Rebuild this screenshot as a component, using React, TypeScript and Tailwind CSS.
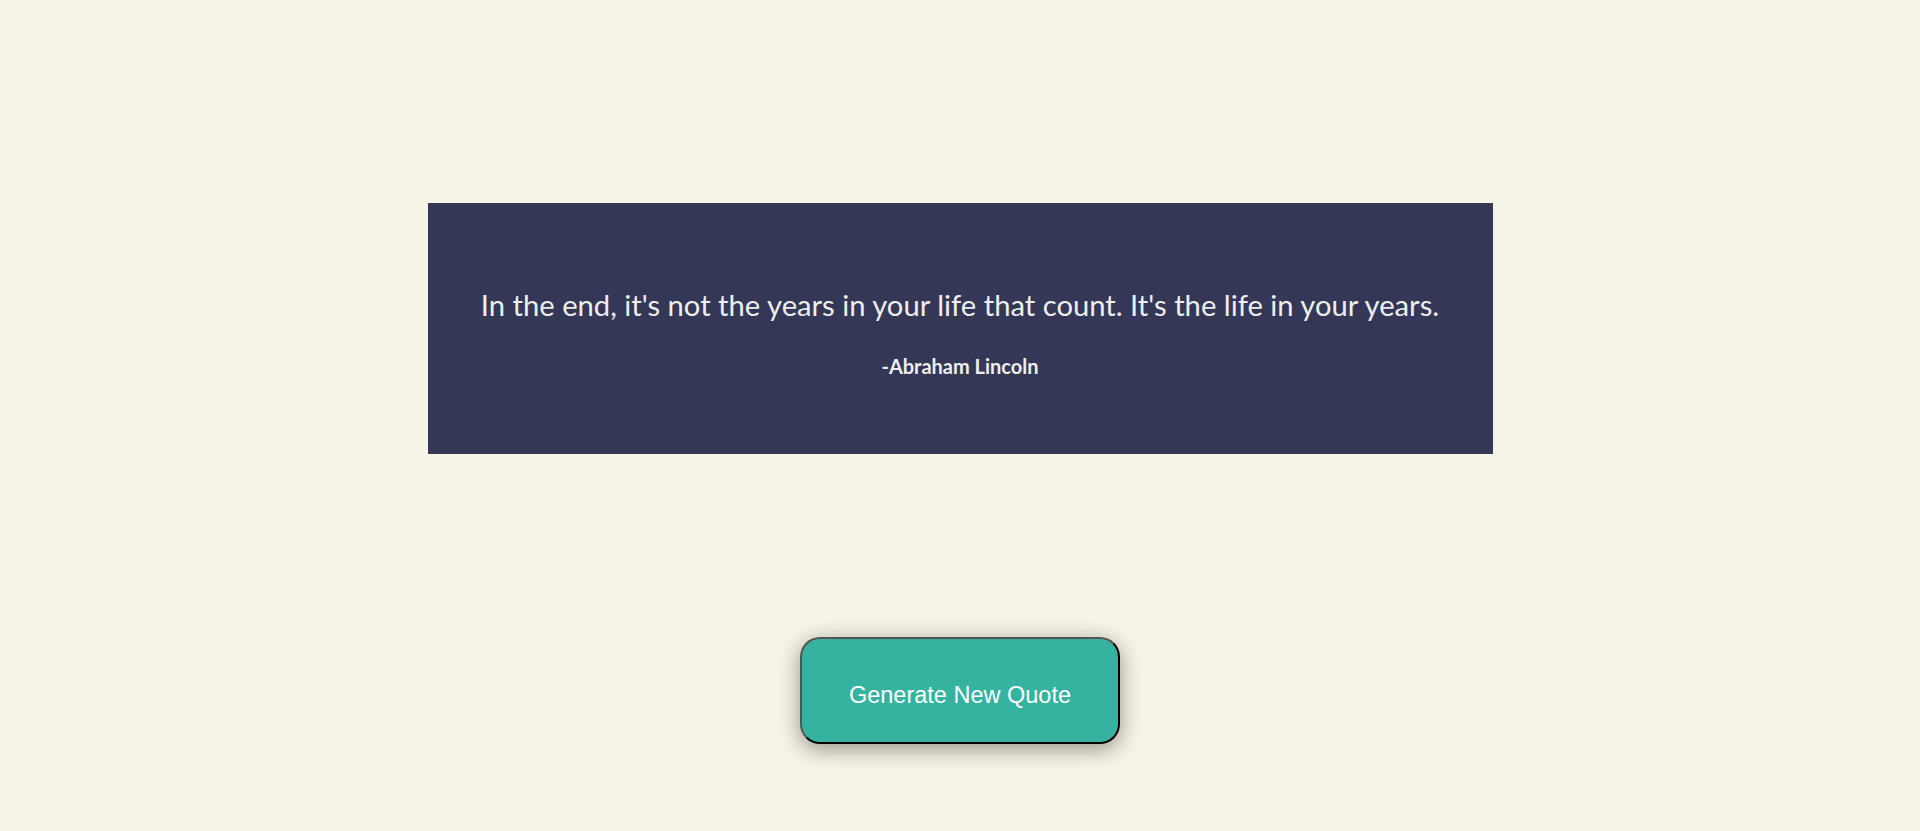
export default function App() {
  return (
    <div className="min-h-[831px] w-full bg-[#f6f4e6] flex flex-col items-center pt-[203px]">
      <div className="w-[1065px] h-[251px] bg-[#343755] flex flex-col items-center justify-center text-[#eeeeee] font-['Lato',sans-serif]">
        <p className="text-[29.2px] leading-none mt-[9px]">
          In the end, it's not the years in your life that count. It's the life in your years.
        </p>
        <p className="text-[20px] font-bold leading-none mt-[37px]">-Abraham Lincoln</p>
      </div>
      <button className="mt-[183px] w-[320px] h-[107px] pt-[10px] rounded-[20px] bg-[#35b3a0] border-2 border-black [border-style:outset] shadow-[0_5px_22px_rgba(0,0,0,0.4)] text-white text-[23.5px] font-['Liberation_Sans',Arial,sans-serif]">
        Generate New Quote
      </button>
    </div>
  );
}
